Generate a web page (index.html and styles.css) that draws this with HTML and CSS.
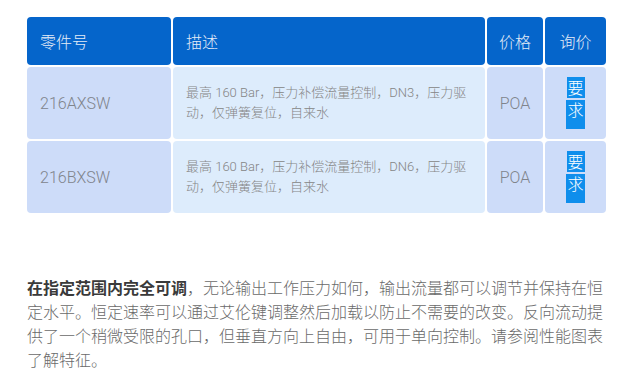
FILE: index.html
```html
<!DOCTYPE html>
<html lang="zh">
<head>
<meta charset="utf-8">
<link rel="stylesheet" href="styles.css">
</head>
<body>
<div class="page">
  <div class="table">
    <div class="cell head">零件号</div>
    <div class="cell head">描述</div>
    <div class="cell head center">价格</div>
    <div class="cell head center">询价</div>

    <div class="cell part">216AXSW</div>
    <div class="cell desc">最高 160 Bar，压力补偿流量控制，DN3，压力驱动，仅弹簧复位，自来水</div>
    <div class="cell part center">POA</div>
    <div class="cell part center"><a class="req"><span class="r1">要</span><span class="r2">求</span></a></div>

    <div class="cell part">216BXSW</div>
    <div class="cell desc">最高 160 Bar，压力补偿流量控制，DN6，压力驱动，仅弹簧复位，自来水</div>
    <div class="cell part center">POA</div>
    <div class="cell part center"><a class="req"><span class="r1">要</span><span class="r2">求</span></a></div>
  </div>

  <p class="text"><strong>在指定范围内完全可调</strong>，无论输出工作压力如何，输出流量都可以调节并保持在恒定水平。恒定速率可以通过艾伦键调整然后加载以防止不需要的改变。反向流动提供了一个稍微受限的孔口，但垂直方向上自由，可用于单向控制。请参阅性能图表了解特征。</p>
</div>
</body>
</html>
```

FILE: styles.css
```css
html, body {
  margin: 0;
  padding: 0;
  background: #ffffff;
}
body {
  font-family: Roboto, "Noto Sans CJK SC", sans-serif;
  font-weight: 300;
}
.page {
  padding: 17px 0 0 27px;
  width: 579px;
}
.table {
  display: grid;
  grid-template-columns: 144px 312px 56px 61px;
  grid-template-rows: 48px 72px 72px;
  gap: 2px;
}
.cell {
  border-radius: 4px;
  display: flex;
  align-items: center;
  padding: 0 13px;
  box-sizing: border-box;
}
.center {
  justify-content: center;
  padding: 0;
}
.head {
  background: #0565cb;
  color: #e4ecf7;
  font-size: 16px;
}
.part {
  background: #cddcf9;
  color: #80848c;
  font-size: 16px;
}
.desc {
  background: #ddecfc;
  color: #858585;
  font-size: 13px;
  line-height: 20px;
}
.req {
  display: flex;
  flex-direction: column;
  align-items: center;
  gap: 2px;
  color: #ffffff;
  font-size: 16px;
  cursor: pointer;
}
.req span {
  display: block;
  background: #0f8eec;
  text-align: center;
}
.r1 {
  width: 18px;
  height: 21px;
  line-height: 24px;
}
.r2 {
  width: 19px;
  height: 29px;
  line-height: 22px;
}
.text {
  margin: 64px 0 0 0;
  font-size: 16px;
  line-height: 24px;
  color: #6a6a6a;
}
.text strong {
  color: #3a3a3a;
  font-weight: bold;
}
```
